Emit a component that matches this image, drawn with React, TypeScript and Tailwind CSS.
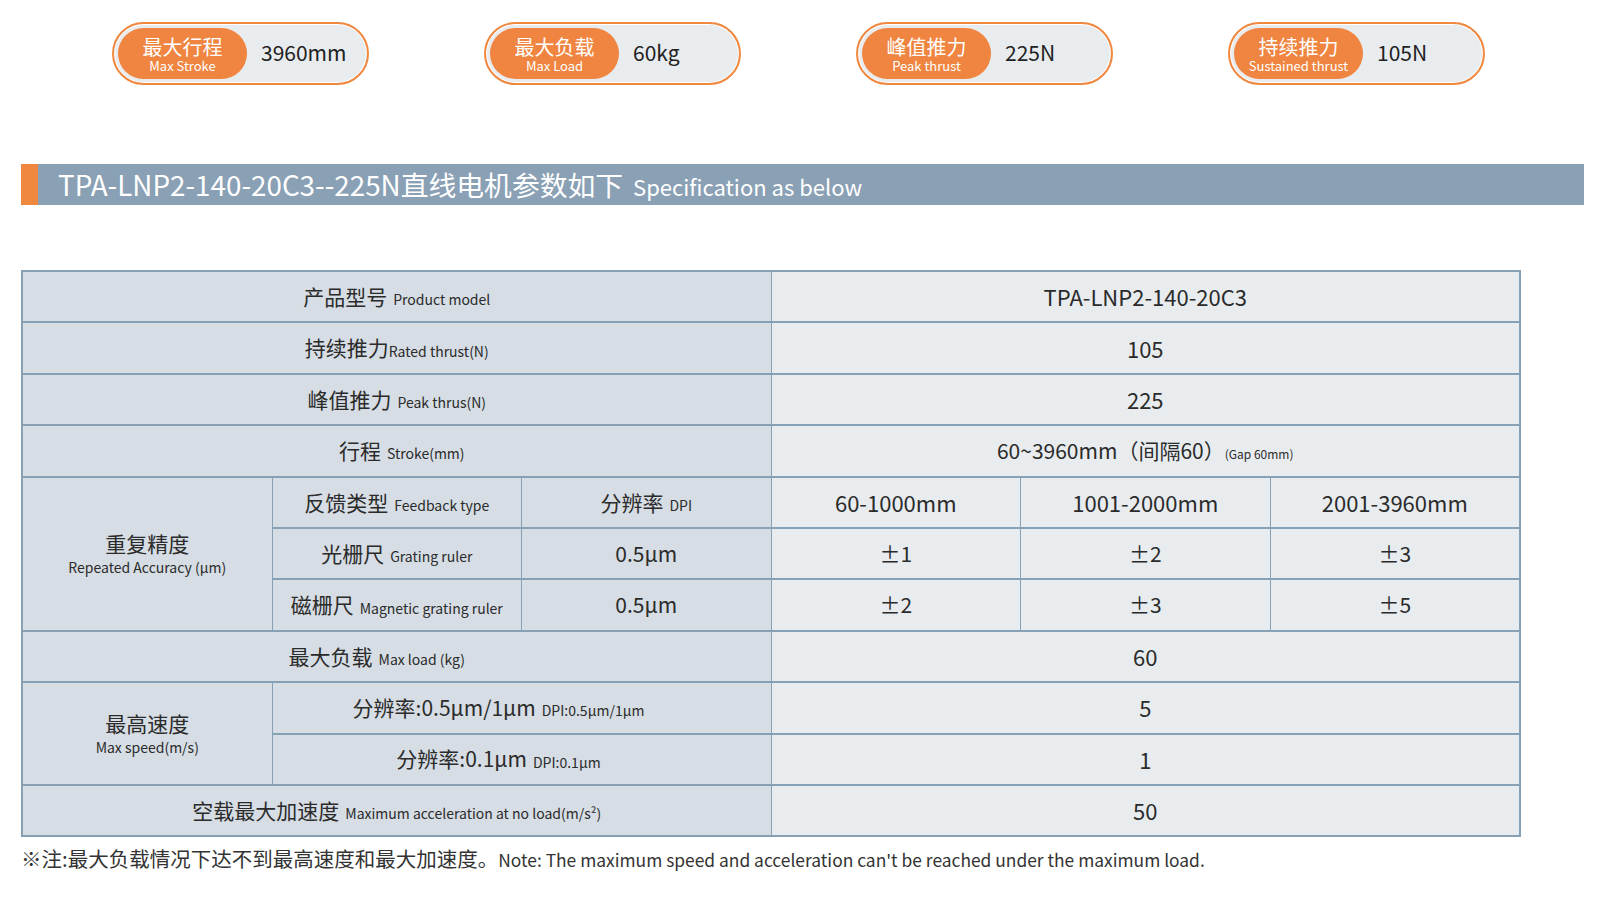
import React from "react";

const font = { fontFamily: '"Noto Sans CJK SC", "Noto Sans", sans-serif' };

const stats = [
  { zh: "最大行程", en: "Max Stroke", value: "3960mm" },
  { zh: "最大负载", en: "Max Load", value: "60kg" },
  { zh: "峰值推力", en: "Peak thrust", value: "225N" },
  { zh: "持续推力", en: "Sustained thrust", value: "105N" },
];

function Pill({ zh, en, value }: { zh: string; en: string; value: string }) {
  return (
    <div className="flex h-[63px] w-[257px] items-center rounded-full border-2 border-[#f0883f] bg-[#e9ecef] p-[4px] shadow-[inset_0_0_0_1px_#ffffff]">
      <div className="flex h-full w-[129px] flex-col items-center justify-center rounded-full bg-[#ef8540] pt-[1px] text-white">
        <span className="text-[20px] leading-[22px]">{zh}</span>
        <span className="text-[13px] leading-[15px]">{en}</span>
      </div>
      <span className="-mt-[1px] ml-[14px] text-[21px] text-[#222]">{value}</span>
    </div>
  );
}

function L({
  zh,
  en,
  tight = false,
  className = "",
}: {
  zh: string;
  en?: string;
  tight?: boolean;
  className?: string;
}) {
  return (
    <div className={`flex items-center justify-center bg-[#d6dde4] text-[#2b2b2b] ${className}`}>
      <span className="text-[21px]">{zh}</span>
      {en && <span className={`${tight ? "" : "ml-[6px]"} mt-[6px] text-[14px]`}>{en}</span>}
    </div>
  );
}

function R({ children, className = "" }: { children: React.ReactNode; className?: string }) {
  return (
    <div className={`flex items-center justify-center bg-[#e8ecef] text-[#2b2b2b] ${className}`}>
      {children}
    </div>
  );
}

export default function App() {
  return (
    <div className="h-[900px] w-[1600px] bg-white" style={font}>
      <div className="flex gap-[115px] pl-[112px] pt-[22px]">
        {stats.map((s) => (
          <Pill key={s.zh} {...s} />
        ))}
      </div>

      <div className="ml-[21px] mt-[79px] flex h-[41px] w-[1563px] items-center bg-[#8aa0b4] text-white">
        <div className="h-full w-[17px] bg-[#f0883f]" />
        <span className="ml-[20px] text-[27.8px]">TPA-LNP2-140-20C3--225N直线电机参数如下</span>
        <span className="ml-[10px] mt-[4px] text-[22px]">Specification as below</span>
      </div>

      <div className="ml-[21px] mt-[65px] grid w-[1500px] grid-cols-[repeat(6,1fr)] grid-rows-[repeat(11,49.4px)] gap-x-[1px] gap-y-[2px] bg-[#86a1b6] p-[2px] text-[22px]">
        <L className="col-span-3" zh="产品型号" en="Product model" />
        <R className="col-span-3">TPA-LNP2-140-20C3</R>

        <L className="col-span-3" zh="持续推力" en="Rated thrust(N)" tight />
        <R className="col-span-3">105</R>

        <L className="col-span-3" zh="峰值推力" en="Peak thrus(N)" />
        <R className="col-span-3">225</R>

        <L className="col-span-3 pl-[10px]" zh="行程" en="Stroke(mm)" />
        <R className="col-span-3 text-[21px]">
          60~3960mm（间隔60）<span className="mt-[6px] text-[12px]">(Gap 60mm)</span>
        </R>

        <div className="row-span-3 flex flex-col items-center justify-center bg-[#d6dde4] text-[#2b2b2b]">
          <span className="text-[21px] leading-[28px]">重复精度</span>
          <span className="text-[14px]">Repeated Accuracy (μm)</span>
        </div>
        <L zh="反馈类型" en="Feedback type" />
        <L zh="分辨率" en="DPI" />
        <R>60-1000mm</R>
        <R>1001-2000mm</R>
        <R>2001-3960mm</R>

        <L zh="光栅尺" en="Grating ruler" />
        <L zh="0.5μm" />
        <R className="text-[21px]">±1</R>
        <R className="text-[21px]">±2</R>
        <R className="text-[21px]">±3</R>

        <L zh="磁栅尺" en="Magnetic grating ruler" />
        <L zh="0.5μm" />
        <R className="text-[21px]">±2</R>
        <R className="text-[21px]">±3</R>
        <R className="text-[21px]">±5</R>

        <L className="col-span-3 pr-[40px]" zh="最大负载" en="Max load (kg)" />
        <R className="col-span-3">60</R>

        <div className="row-span-2 flex flex-col items-center justify-center bg-[#d6dde4] text-[#2b2b2b]">
          <span className="text-[21px] leading-[28px]">最高速度</span>
          <span className="text-[14px]">Max speed(m/s)</span>
        </div>
        <L className="col-span-2 pr-[46px]" zh="分辨率:0.5μm/1μm" en="DPI:0.5μm/1μm" />
        <R className="col-span-3">5</R>

        <L className="col-span-2 pr-[46px]" zh="分辨率:0.1μm" en="DPI:0.1μm" />
        <R className="col-span-3">1</R>

        <L className="col-span-3" zh="空载最大加速度" en="Maximum acceleration at no load(m/s²)" />
        <R className="col-span-3">50</R>
      </div>

      <p className="ml-[21px] mt-[6px] text-[#333]">
        <span className="text-[20.5px]">※注:最大负载情况下达不到最高速度和最大加速度。</span>
        <span className="text-[17.4px]">Note: The maximum speed and acceleration can't be reached under the maximum load.</span>
      </p>
    </div>
  );
}
